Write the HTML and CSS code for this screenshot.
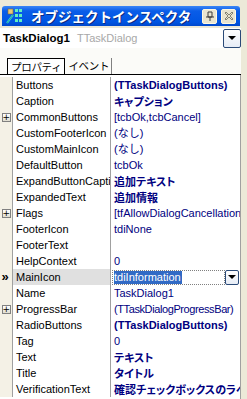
FILE: index.html
```html
<!DOCTYPE html>
<html>
<head>
  <title>Object Inspector</title>
  <meta charset="UTF-8">
  <link rel="stylesheet" href="styles.css">
</head>
<body>
  <div class="window">
    <div class="titlebar">
      <svg class="app-icon" width="17" height="16" viewBox="0 0 17 16">
        <rect x="2" y="1" width="5" height="5" fill="#e8c878" stroke="#8a6a30" stroke-width="0.6"/>
        <path d="M1 15 L7 7" stroke="#40e0d0" stroke-width="2"/>
        <path d="M1 15 L7 7" stroke="#108080" stroke-width="0.6"/>
        <rect x="9" y="1" width="3" height="3" fill="#60f0c0"/>
        <rect x="13" y="1" width="3" height="3" fill="#60f0c0"/>
        <rect x="9" y="6" width="3" height="3" fill="#60f0c0"/>
        <rect x="13" y="6" width="3" height="3" fill="#60f0c0"/>
        <rect x="9" y="11" width="3" height="3" fill="#60f0c0"/>
        <rect x="13" y="11" width="3" height="3" fill="#60f0c0"/>
      </svg>
      <span class="title">オブジェクトインスペクタ</span>
      <span class="tbtn">
        <svg width="10" height="11" viewBox="0 0 10 11"><path d="M3 1 H7 V6 H3 Z M1 6 H9 M5 6 V10" fill="none" stroke="#3a3a3a" stroke-width="1"/></svg>
      </span>
      <span class="tbtn">
        <svg width="10" height="10" viewBox="0 0 10 10"><path d="M1 2 L2 1 L5 4 L8 1 L9 2 L6 5 L9 8 L8 9 L5 6 L2 9 L1 8 L4 5 Z" fill="none" stroke="#6a6a5a" stroke-width="0.8"/></svg>
      </span>
    </div>

    <div class="combo">
      <span class="obj-name">TaskDialog1</span>
      <span class="obj-type">TTaskDialog</span>
      <span class="drop-btn"><span class="tri"></span></span>
    </div>

    <div class="tab-area">
      <div class="tabs">
        <span class="tab active">プロパティ</span>
        <span class="tab">イベント</span>
      </div>
    </div>

    <div class="grid">
      <div class="row"><span class="gutter"></span><span class="name">Buttons</span><span class="value bold">(TTaskDialogButtons)</span></div>
      <div class="row"><span class="gutter"></span><span class="name">Caption</span><span class="value bold jp">キャプション</span></div>
      <div class="row"><span class="gutter"><span class="plus">+</span></span><span class="name">CommonButtons</span><span class="value">[tcbOk,tcbCancel]</span></div>
      <div class="row"><span class="gutter"></span><span class="name">CustomFooterIcon</span><span class="value">(なし)</span></div>
      <div class="row"><span class="gutter"></span><span class="name">CustomMainIcon</span><span class="value">(なし)</span></div>
      <div class="row"><span class="gutter"></span><span class="name">DefaultButton</span><span class="value">tcbOk</span></div>
      <div class="row"><span class="gutter"></span><span class="name"><span class="clip">ExpandButtonCaption</span></span><span class="value bold jp">追加テキスト</span></div>
      <div class="row"><span class="gutter"></span><span class="name">ExpandedText</span><span class="value bold jp">追加情報</span></div>
      <div class="row"><span class="gutter"><span class="plus">+</span></span><span class="name">Flags</span><span class="value">[tfAllowDialogCancellation]</span></div>
      <div class="row"><span class="gutter"></span><span class="name">FooterIcon</span><span class="value">tdiNone</span></div>
      <div class="row"><span class="gutter"></span><span class="name">FooterText</span><span class="value"></span></div>
      <div class="row"><span class="gutter"></span><span class="name">HelpContext</span><span class="value">0</span></div>
      <div class="row selected">
        <span class="gutter"><span class="marker">»</span></span>
        <span class="name">MainIcon</span>
        <span class="value editor">
          <span class="edit"><span class="sel-text">tdiInformation</span></span>
          <span class="drop-btn small"><span class="tri"></span></span>
        </span>
      </div>
      <div class="row"><span class="gutter"></span><span class="name">Name</span><span class="value">TaskDialog1</span></div>
      <div class="row"><span class="gutter"><span class="plus">+</span></span><span class="name">ProgressBar</span><span class="value narrow">(TTaskDialogProgressBar)</span></div>
      <div class="row"><span class="gutter"></span><span class="name">RadioButtons</span><span class="value bold">(TTaskDialogButtons)</span></div>
      <div class="row"><span class="gutter"></span><span class="name">Tag</span><span class="value">0</span></div>
      <div class="row"><span class="gutter"></span><span class="name">Text</span><span class="value bold jp">テキスト</span></div>
      <div class="row"><span class="gutter"></span><span class="name">Title</span><span class="value bold jp">タイトル</span></div>
      <div class="row"><span class="gutter"></span><span class="name">VerificationText</span><span class="value bold jp">確認チェックボックスのラベル</span></div>
    </div>
  </div>
</body>
</html>
```

FILE: styles.css
```css
body {
  margin: 0;
  background: #ece9d8;
  font-family: "Liberation Sans", "Noto Sans CJK JP", sans-serif;
  font-size: 11px;
  overflow: hidden;
}
.window {
  width: 241px;
  height: 399px;
  padding-top: 6px;
  box-sizing: border-box;
  display: flex;
  flex-direction: column;
}
.titlebar {
  margin-left: 2px;
  width: 238px;
  height: 20px;
  border-radius: 3px 3px 0 0;
  background: linear-gradient(#3a86f6, #0a5de8 25%, #0055e3 80%, #0048cc);
  display: flex;
  align-items: center;
  gap: 3px;
  padding: 0 4px 0 4px;
  box-sizing: border-box;
}
.app-icon {
  flex: none;
}
.title {
  flex: 1;
  color: #fff;
  font-family: "Noto Sans CJK JP", sans-serif;
  font-weight: bold;
  font-size: 13.5px;
  margin-left: 5px;
  white-space: nowrap;
  text-shadow: 1px 1px 0 #0a2a80;
  line-height: 20px;
}
.tbtn {
  width: 15px;
  height: 15px;
  border-radius: 2px;
  background: #e8e4d0;
  border: 1px solid #fff8e0;
  display: flex;
  align-items: center;
  justify-content: center;
  box-sizing: border-box;
  margin-left: 1px;
}
.combo {
  margin-top: 2px;
  height: 20px;
  background: #fff;
  display: flex;
  align-items: center;
  padding-left: 3px;
}
.obj-name {
  font-weight: bold;
  font-size: 11.5px;
  color: #000;
}
.obj-type {
  color: #a8a8a8;
  margin-left: 7px;
  flex: 1;
}
.drop-btn {
  width: 18px;
  height: 19px;
  box-sizing: border-box;
  border: 1px solid #2a4a78;
  border-radius: 2px;
  background: linear-gradient(#ffffff, #e6ecf6);
  display: flex;
  align-items: center;
  justify-content: center;
}
.tri {
  width: 0;
  height: 0;
  border-left: 4px solid transparent;
  border-right: 4px solid transparent;
  border-top: 4px solid #000;
}
.tab-area {
  background: #fbfbf8;
  height: 26px;
  display: flex;
  align-items: flex-end;
  border-bottom: 1px solid #000;
}
.tabs {
  display: flex;
  padding-left: 7px;
}
.tab {
  font-family: "Noto Sans CJK JP", sans-serif;
  font-size: 10.5px;
  line-height: 15px;
  padding: 0 2px 0 3px;
  border-right: 1px solid #808080;
  color: #000;
  letter-spacing: -0.3px;
}
.tab.active {
  border: 1px solid #000;
  border-bottom: none;
  background: #fff;
  padding: 0 3px;
}
.grid {
  flex: 1;
  background: #fff;
  border-right: 1px solid #a0a0a0;
  padding-top: 2px;
  overflow: hidden;
}
.row {
  display: flex;
  height: 16px;
  line-height: 16px;
}
.gutter {
  width: 13px;
  flex: none;
  background: #f4f1e6;
  border-right: 1px solid #a0a0a0;
  box-sizing: border-box;
  display: flex;
  align-items: center;
  justify-content: center;
}
.plus {
  width: 9px;
  height: 9px;
  box-sizing: border-box;
  border: 1px solid #808080;
  background: linear-gradient(#fff, #e0ddd0);
  font-size: 9px;
  line-height: 6px;
  text-align: center;
  color: #000;
  font-family: "DejaVu Sans", sans-serif;
}
.marker {
  font-weight: bold;
  font-size: 13px;
  line-height: 16px;
  color: #000;
  margin-left: -2px;
}
.name {
  width: 98px;
  flex: none;
  padding-left: 3px;
  box-sizing: border-box;
  border-right: 1px solid #a0a0a0;
  white-space: nowrap;
  overflow: hidden;
  color: #000;
}
.clip {
  display: block;
  width: 94px;
  overflow: hidden;
}
.value {
  flex: 1;
  padding-left: 3px;
  white-space: nowrap;
  overflow: hidden;
  color: #000080;
}
.value.bold {
  font-weight: bold;
}
.value.narrow {
  letter-spacing: -0.4px;
}
.value.jp {
  font-family: "Noto Sans CJK JP", sans-serif;
  font-feature-settings: "palt" 1;
  font-size: 11px;
}
.selected .name {
  background: #e0e0e0;
}
.editor {
  display: flex;
  padding-left: 1px;
  align-items: center;
}
.edit {
  flex: 1;
  height: 15px;
  border: 1px dotted #808080;
  box-sizing: border-box;
  display: flex;
  align-items: center;
  padding-left: 1px;
}
.sel-text {
  background: #316ac5;
  color: #fff;
  line-height: 13px;
  padding-right: 1px;
}
.drop-btn.small {
  width: 14px;
  height: 15px;
  margin-right: 1px;
}
```
